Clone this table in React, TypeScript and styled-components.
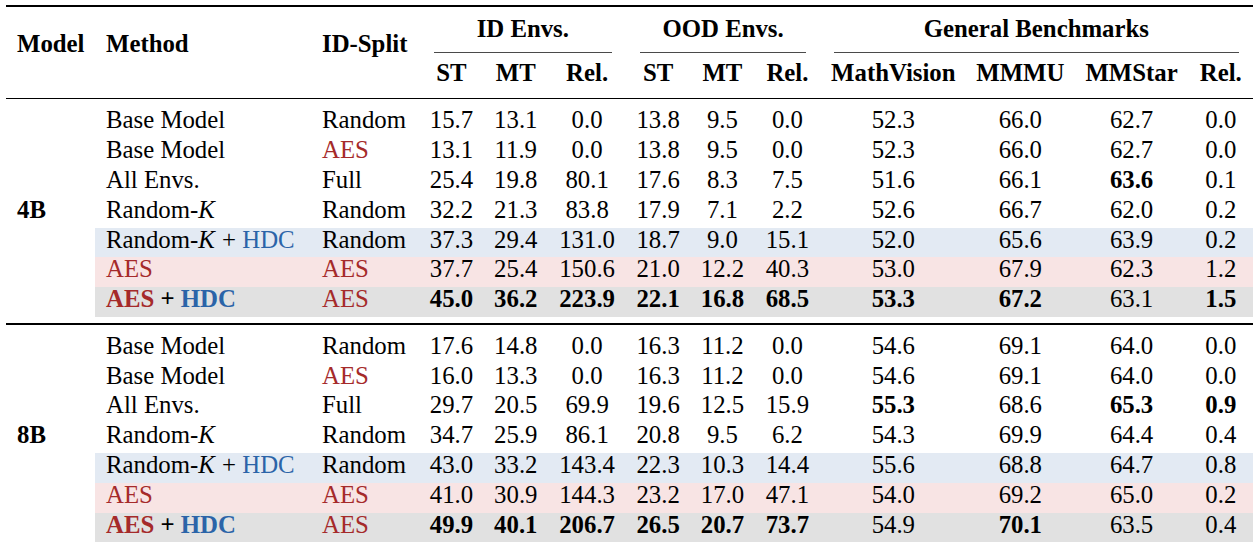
import React from "react";
import styled, { createGlobalStyle } from "styled-components";

const COLS = [216, 108.5, 64, 64.6, 78, 64, 64.7, 65.3, 146.5, 107.5, 115, 63.5];
const MODEL_W = 89;
const ROW_H = 29.8;
const colTemplate = COLS.map((c) => `${c}px`).join(" ");

const RED = "#a52a2a";
const BLUE = "#2b64a8";

const GlobalStyle = createGlobalStyle`
  html, body { margin: 0; padding: 0; background: #ffffff; }
  body {
    font-family: "Liberation Serif", "Times New Roman", serif;
    color: #000;
  }
`;

const Page = styled.div`
  padding: 5.3px 0 0 6px;
  width: 1246.6px;
  font-size: 24.8px;
  line-height: 24.8px;
`;

const TopRule = styled.div`
  height: 2px;
  background: #000;
`;

const MidRule = styled.div`
  height: 1.5px;
  background: #000;
`;

const Header = styled.div`
  display: grid;
  grid-template-columns: ${MODEL_W}px ${colTemplate};
  grid-template-rows: 46px 44.4px;
  font-weight: bold;
`;

const HeadCell = styled.div<{ $col: number }>`
  grid-column: ${(p) => p.$col};
  grid-row: 1 / 3;
  padding: 25.2px 0 0 11px;
  white-space: nowrap;
`;

const GroupCell = styled.div<{ $col: number; $span: number }>`
  grid-column: ${(p) => p.$col} / span ${(p) => p.$span};
  grid-row: 1;
  display: flex;
  flex-direction: column;
  padding-top: 9.6px;
  text-align: center;
  white-space: nowrap;
`;

const GroupLine = styled.div`
  margin: auto 14px 0;
  height: 1px;
  background: #4a4a4a;
`;

const SubCell = styled.div<{ $col: number }>`
  grid-column: ${(p) => p.$col};
  grid-row: 2;
  padding-top: 8.2px;
  text-align: center;
  white-space: nowrap;
`;

const Block = styled.div`
  display: flex;
  padding: 9.3px 0 6px;
`;

const ModelCell = styled.div`
  width: ${MODEL_W}px;
  flex: none;
  display: flex;
  flex-direction: column;
  justify-content: center;
`;

const ModelLabel = styled.div`
  height: ${ROW_H}px;
  padding-left: 11px;
  font-weight: bold;
`;

const RowList = styled.div`
  display: flex;
  flex-direction: column;
  flex: 1;
`;

const Row = styled.div<{ $bg?: string }>`
  display: grid;
  grid-template-columns: ${colTemplate};
  height: ${ROW_H}px;
  background: ${(p) => p.$bg ?? "transparent"};
`;

const TextCell = styled.div`
  padding-left: 11px;
  white-space: nowrap;
`;

const NumCell = styled.div<{ $bold?: boolean }>`
  text-align: center;
  white-space: nowrap;
  font-weight: ${(p) => (p.$bold ? "bold" : "normal")};
`;

const Red = styled.span<{ $bold?: boolean }>`
  color: ${RED};
  font-weight: ${(p) => (p.$bold ? "bold" : "inherit")};
`;

const Blue = styled.span<{ $bold?: boolean }>`
  color: ${BLUE};
  font-weight: ${(p) => (p.$bold ? "bold" : "inherit")};
`;

const Bold = styled.span`
  font-weight: bold;
`;

const MathK = styled.i`
  font-style: italic;
  padding-right: 1px;
`;

const BG = {
  blue: "#e3eaf3",
  pink: "#f8e4e4",
  gray: "#e1e1e1",
};

type RowData = {
  method: React.ReactNode;
  split: React.ReactNode;
  nums: string[];
  bold: number[];
  bg?: string;
};

const baseModel = <>Base Model</>;
const allEnvs = <>All Envs.</>;
const randomK = (
  <>
    Random-<MathK>K</MathK>
  </>
);
const randomKHdc = (
  <>
    Random-<MathK>K</MathK> + <Blue>HDC</Blue>
  </>
);
const aes = <Red>AES</Red>;
const aesHdc = (
  <>
    <Red $bold>AES</Red> <Bold>+</Bold> <Blue $bold>HDC</Blue>
  </>
);

const ALL = [0, 1, 2, 3, 4, 5];

const blocks: { model: string; rows: RowData[] }[] = [
  {
    model: "4B",
    rows: [
      { method: baseModel, split: "Random", nums: ["15.7", "13.1", "0.0", "13.8", "9.5", "0.0", "52.3", "66.0", "62.7", "0.0"], bold: [] },
      { method: baseModel, split: aes, nums: ["13.1", "11.9", "0.0", "13.8", "9.5", "0.0", "52.3", "66.0", "62.7", "0.0"], bold: [] },
      { method: allEnvs, split: "Full", nums: ["25.4", "19.8", "80.1", "17.6", "8.3", "7.5", "51.6", "66.1", "63.6", "0.1"], bold: [8] },
      { method: randomK, split: "Random", nums: ["32.2", "21.3", "83.8", "17.9", "7.1", "2.2", "52.6", "66.7", "62.0", "0.2"], bold: [] },
      { method: randomKHdc, split: "Random", nums: ["37.3", "29.4", "131.0", "18.7", "9.0", "15.1", "52.0", "65.6", "63.9", "0.2"], bold: [], bg: BG.blue },
      { method: aes, split: aes, nums: ["37.7", "25.4", "150.6", "21.0", "12.2", "40.3", "53.0", "67.9", "62.3", "1.2"], bold: [], bg: BG.pink },
      { method: aesHdc, split: aes, nums: ["45.0", "36.2", "223.9", "22.1", "16.8", "68.5", "53.3", "67.2", "63.1", "1.5"], bold: [...ALL, 6, 7, 9], bg: BG.gray },
    ],
  },
  {
    model: "8B",
    rows: [
      { method: baseModel, split: "Random", nums: ["17.6", "14.8", "0.0", "16.3", "11.2", "0.0", "54.6", "69.1", "64.0", "0.0"], bold: [] },
      { method: baseModel, split: aes, nums: ["16.0", "13.3", "0.0", "16.3", "11.2", "0.0", "54.6", "69.1", "64.0", "0.0"], bold: [] },
      { method: allEnvs, split: "Full", nums: ["29.7", "20.5", "69.9", "19.6", "12.5", "15.9", "55.3", "68.6", "65.3", "0.9"], bold: [6, 8, 9] },
      { method: randomK, split: "Random", nums: ["34.7", "25.9", "86.1", "20.8", "9.5", "6.2", "54.3", "69.9", "64.4", "0.4"], bold: [] },
      { method: randomKHdc, split: "Random", nums: ["43.0", "33.2", "143.4", "22.3", "10.3", "14.4", "55.6", "68.8", "64.7", "0.8"], bold: [], bg: BG.blue },
      { method: aes, split: aes, nums: ["41.0", "30.9", "144.3", "23.2", "17.0", "47.1", "54.0", "69.2", "65.0", "0.2"], bold: [], bg: BG.pink },
      { method: aesHdc, split: aes, nums: ["49.9", "40.1", "206.7", "26.5", "20.7", "73.7", "54.9", "70.1", "63.5", "0.4"], bold: [...ALL, 7], bg: BG.gray },
    ],
  },
];

const subHeads = ["ST", "MT", "Rel.", "ST", "MT", "Rel.", "MathVision", "MMMU", "MMStar", "Rel."];

export default function App() {
  return (
    <>
      <GlobalStyle />
      <Page>
        <TopRule />
        <Header>
          <HeadCell $col={1}>Model</HeadCell>
          <HeadCell $col={2}>Method</HeadCell>
          <HeadCell $col={3}>ID-Split</HeadCell>
          <GroupCell $col={4} $span={3}>
            ID Envs.
            <GroupLine />
          </GroupCell>
          <GroupCell $col={7} $span={3}>
            OOD Envs.
            <GroupLine />
          </GroupCell>
          <GroupCell $col={10} $span={4}>
            General Benchmarks
            <GroupLine />
          </GroupCell>
          {subHeads.map((h, i) => (
            <SubCell key={i} $col={i + 4}>
              {h}
            </SubCell>
          ))}
        </Header>
        <MidRule />
        {blocks.map((b, bi) => (
          <React.Fragment key={b.model}>
            {bi > 0 && <MidRule />}
            <Block>
              <ModelCell>
                <ModelLabel>{b.model}</ModelLabel>
              </ModelCell>
              <RowList>
                {b.rows.map((r, ri) => (
                  <Row key={ri} $bg={r.bg}>
                    <TextCell>{r.method}</TextCell>
                    <TextCell>{r.split}</TextCell>
                    {r.nums.map((n, ni) => (
                      <NumCell key={ni} $bold={r.bold.includes(ni)}>
                        {n}
                      </NumCell>
                    ))}
                  </Row>
                ))}
              </RowList>
            </Block>
          </React.Fragment>
        ))}
      </Page>
    </>
  );
}
